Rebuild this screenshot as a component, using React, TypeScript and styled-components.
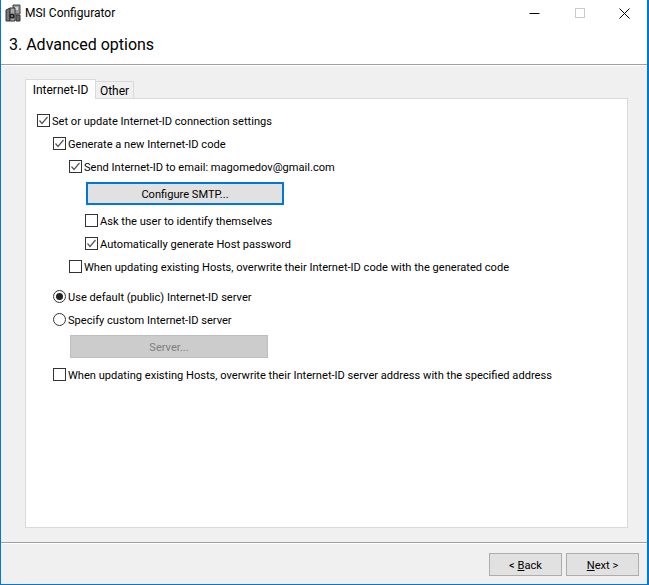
import React from "react";
import styled, { createGlobalStyle } from "styled-components";

const Global = createGlobalStyle`
  html, body { margin: 0; padding: 0; background: #fff; }
  * { box-sizing: border-box; }
`;

const Window = styled.div`
  width: 649px;
  height: 585px;
  display: flex;
  flex-direction: column;
  border: 1px solid #0078d7;
  border-top: 0;
  border-right-width: 2px;
  background: #f0f0f0;
  font-family: "Roboto", "Liberation Sans", sans-serif;
  font-size: 11.1px;
  color: #000;
  overflow: hidden;
`;

const TitleBar = styled.div`
  height: 26px;
  flex: none;
  background: #fff;
  display: flex;
  align-items: center;
  padding-left: 4px;
`;

const TitleText = styled.span`
  font-size: 12px;
  margin-left: 3px;
`;

const WindowButtons = styled.div`
  margin-left: auto;
  display: flex;
`;

const WindowButton = styled.div`
  width: 45px;
  height: 26px;
  display: flex;
  align-items: center;
  justify-content: center;
`;

const Header = styled.div`
  height: 39px;
  flex: none;
  background: #fff;
  border-bottom: 1px solid #a0a0a0;
  padding: 7px 0 0 8px;
  font-size: 16px;
  line-height: 24px;
`;

const Content = styled.div`
  flex: 1;
  border-top: 1px solid #fff;
  padding: 13px 19px 14px 24px;
  display: flex;
  flex-direction: column;
  min-height: 0;
`;

const TabStrip = styled.div`
  display: flex;
  height: 20px;
  flex: none;
  align-items: flex-end;
  position: relative;
  z-index: 1;
  margin-bottom: -1px;
  font-size: 12px;
`;

const Tab = styled.div<{ $active?: boolean }>`
  height: ${(p) => (p.$active ? 20 : 18)}px;
  width: ${(p) => (p.$active ? 71 : 39)}px;
  background: ${(p) => (p.$active ? "#fff" : "#f0f0f0")};
  border: 1px solid #d9d9d9;
  border-bottom: ${(p) => (p.$active ? "0" : "1px solid #d9d9d9")};
  margin-left: ${(p) => (p.$active ? 0 : -1)}px;
  display: flex;
  align-items: center;
  justify-content: center;
  padding-top: ${(p) => (p.$active ? 0 : 1)}px;
`;

const Panel = styled.div`
  flex: 1;
  background: #fff;
  border: 1px solid #d9d9d9;
  padding: 13px 0 0 11px;
  display: flex;
  flex-direction: column;
`;

const Row = styled.label<{ $indent?: number; $gap?: number }>`
  display: flex;
  align-items: center;
  height: 17px;
  margin-left: ${(p) => p.$indent ?? 0}px;
  margin-top: ${(p) => p.$gap ?? 6}px;
  white-space: nowrap;
`;

const RowText = styled.span`
  padding-top: 1px;
`;

const Box = styled.span`
  width: 13px;
  height: 13px;
  flex: none;
  border: 1px solid #333;
  background: #fff;
  margin-right: 2px;
  display: flex;
`;

const Radio = styled.span<{ $on?: boolean }>`
  width: 13px;
  height: 13px;
  flex: none;
  border: 1px solid #333;
  border-radius: 50%;
  background: #fff;
  margin-right: 2px;
  display: flex;
  align-items: center;
  justify-content: center;
  &::after {
    content: "";
    width: 7px;
    height: 7px;
    border-radius: 50%;
    background: ${(p) => (p.$on ? "#222" : "transparent")};
  }
`;

const ActionButton = styled.div<{ $focused?: boolean; $disabled?: boolean }>`
  width: 198px;
  height: 23px;
  margin-left: ${(p) => (p.$focused ? 49 : 33)}px;
  margin-top: 7px;
  padding-top: 1px;
  background: ${(p) => (p.$disabled ? "#cccccc" : "#e1e1e1")};
  border: ${(p) => (p.$focused ? "2px solid #0078d7" : "1px solid #bfbfbf")};
  color: ${(p) => (p.$disabled ? "#7f7f7f" : "#000")};
  display: flex;
  align-items: center;
  justify-content: center;
`;

const Footer = styled.div`
  height: 42px;
  flex: none;
  border-top: 1px solid #a0a0a0;
  box-shadow: inset 0 1px 0 #fff;
  display: flex;
  justify-content: flex-end;
  gap: 4px;
  padding: 10px 8px 0 0;
`;

const NavButton = styled.div`
  width: 73px;
  height: 23px;
  padding-top: 1px;
  background: #e1e1e1;
  border: 1px solid #adadad;
  display: flex;
  align-items: center;
  justify-content: center;
  u { text-underline-offset: 1px; }
`;

const Check = () => (
  <svg width="11" height="11" viewBox="0 0 11 11">
    <path d="M1.5 5.5 L4 8.5 L9.5 2" fill="none" stroke="#555" strokeWidth="1.2" />
  </svg>
);

const CheckRow = ({ indent, gap, on, children }: { indent?: number; gap?: number; on?: boolean; children: React.ReactNode }) => (
  <Row $indent={indent} $gap={gap}>
    <Box>{on && <Check />}</Box>
    <RowText>{children}</RowText>
  </Row>
);

const AppIcon = () => (
  <svg width="17" height="18" viewBox="0 0 17 18">
    <path d="M8 1H15V10H8Z" fill="#9a9a9a" stroke="#444" />
    <rect x="10" y="3" width="3" height="3" fill="#d8d8d8" />
    <path d="M1 6L5 4V17H1Z" fill="#777" stroke="#333" />
    <path d="M5 4H10V17H5Z" fill="#aaa" stroke="#333" />
    <circle cx="7" cy="12" r="2.6" fill="#222" />
    <circle cx="7" cy="12" r="0.8" fill="#ddd" />
    <path d="M11 11H15V17H11Z" fill="#666" stroke="#333" />
  </svg>
);

export default function App() {
  return (
    <>
      <Global />
      <Window>
        <TitleBar>
          <AppIcon />
          <TitleText>MSI Configurator</TitleText>
          <WindowButtons>
            <WindowButton>
              <svg width="11" height="11"><path d="M0.5 5.5H10.5" stroke="#000" /></svg>
            </WindowButton>
            <WindowButton>
              <svg width="10" height="10"><rect x="0.5" y="0.5" width="9" height="9" fill="none" stroke="#ccc" /></svg>
            </WindowButton>
            <WindowButton>
              <svg width="11" height="11"><path d="M0.5 0.5L10.5 10.5M10.5 0.5L0.5 10.5" stroke="#000" /></svg>
            </WindowButton>
          </WindowButtons>
        </TitleBar>
        <Header>3. Advanced options</Header>
        <Content>
          <TabStrip>
            <Tab $active>Internet-ID</Tab>
            <Tab>Other</Tab>
          </TabStrip>
          <Panel>
            <CheckRow on gap={0}>Set or update Internet-ID connection settings</CheckRow>
            <CheckRow on indent={16}>Generate a new Internet-ID code</CheckRow>
            <CheckRow on indent={32}>Send Internet-ID to email: magomedov@gmail.com</CheckRow>
            <ActionButton $focused>Configure SMTP...</ActionButton>
            <CheckRow indent={48} gap={7}>Ask the user to identify themselves</CheckRow>
            <CheckRow on indent={48}>Automatically generate Host password</CheckRow>
            <CheckRow indent={32}>When updating existing Hosts, overwrite their Internet-ID code with the generated code</CheckRow>
            <Row $indent={16} $gap={13}><Radio $on /><RowText>Use default (public) Internet-ID server</RowText></Row>
            <Row $indent={16}><Radio /><RowText>Specify custom Internet-ID server</RowText></Row>
            <ActionButton $disabled>Server...</ActionButton>
            <CheckRow indent={16} gap={8}>When updating existing Hosts, overwrite their Internet-ID server address with the specified address</CheckRow>
          </Panel>
        </Content>
        <Footer>
          <NavButton>&lt;&nbsp;<u>B</u>ack</NavButton>
          <NavButton><u>N</u>ext&nbsp;&gt;</NavButton>
        </Footer>
      </Window>
    </>
  );
}
